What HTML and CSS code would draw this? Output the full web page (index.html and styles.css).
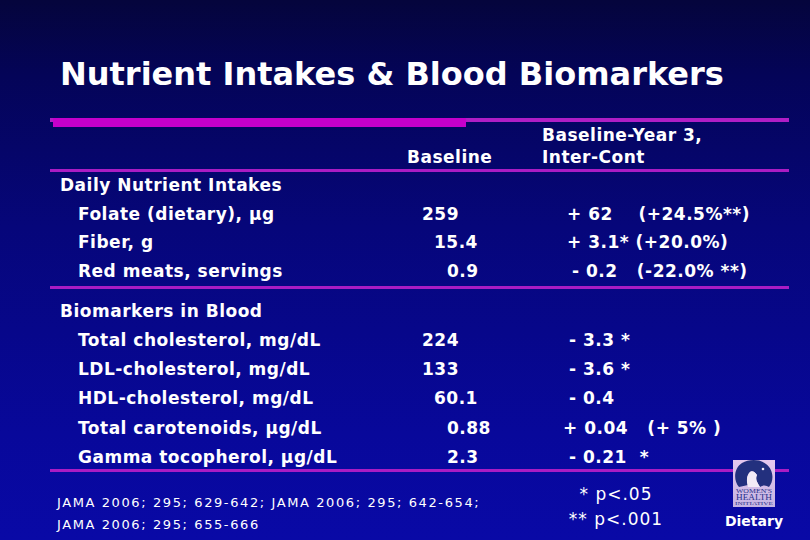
FILE: index.html
```
<!DOCTYPE html>
<html>
<head>
<meta charset="utf-8">
<link rel="stylesheet" href="styles.css">
</head>
<body>
<div class="slide">
  <h1 class="title">Nutrient Intakes &amp; Blood Biomarkers</h1>
  <div class="table">
    <div class="rule-top"><div class="bar"></div></div>
    <div class="row head">
      <div class="c1"></div>
      <div class="c2 hb">Baseline</div>
      <div class="c3">Baseline-Year 3,<br>Inter-Cont</div>
    </div>
    <div class="rule"></div>
    <div class="sec-title s1">Daily Nutrient Intakes</div>
    <div class="row r1"><div class="c1">Folate (dietary), µg</div><div class="c2 p15">259</div><div class="c3 o25">+ 62    (+24.5%**)</div></div>
    <div class="row r1"><div class="c1">Fiber, g</div><div class="c2 p27">15.4</div><div class="c3 o25">+ 3.1* (+20.0%)</div></div>
    <div class="row r1"><div class="c1">Red meats, servings</div><div class="c2 p40">0.9</div><div class="c3 o30">- 0.2   (-22.0% **)</div></div>
    <div class="rule"></div>
    <div class="sec-title s2">Biomarkers in Blood</div>
    <div class="row r2"><div class="c1">Total cholesterol, mg/dL</div><div class="c2 p15">224</div><div class="c3 o27">- 3.3 *</div></div>
    <div class="row r2"><div class="c1">LDL-cholesterol, mg/dL</div><div class="c2 p15">133</div><div class="c3 o27">- 3.6 *</div></div>
    <div class="row r2"><div class="c1">HDL-cholesterol, mg/dL</div><div class="c2 p27">60.1</div><div class="c3 o27">- 0.4</div></div>
    <div class="row r2"><div class="c1">Total carotenoids, µg/dL</div><div class="c2 p40">0.88</div><div class="c3 o21">+ 0.04   (+ 5% )</div></div>
    <div class="row r2"><div class="c1">Gamma tocopherol, µg/dL</div><div class="c2 p40">2.3</div><div class="c3 o27">- 0.21  *</div></div>
    <div class="rule last"></div>
  </div>
  <div class="footer">
    <div class="refs">JAMA 2006; 295; 629-642; JAMA 2006; 295; 642-654;<br>JAMA 2006; 295; 655-666</div>
    <div class="pvals">* p&lt;.05<br>** p&lt;.001</div>
    <div class="brand">
      <svg class="logo" width="42" height="47" viewBox="0 0 42 47">
        <defs>
          <linearGradient id="lg" x1="0" y1="0" x2="0" y2="1">
            <stop offset="0" stop-color="#e6c8ee"/>
            <stop offset="1" stop-color="#c4b4e2"/>
          </linearGradient>
        </defs>
        <rect x="0" y="0" width="42" height="47" fill="url(#lg)"/>
        <path d="M6 27 C0 20 1 8 9 3 C16 -1 27 -1 33 4 C41 10 41 21 36 27 C33 25 30 25 27 27 C24 22 22 19 24 15 C22 12 19 10 17 12 C14 15 13 20 15 25 C12 26 9 26 6 27 Z" fill="#23307e"/>
        <path d="M17 12 C19 10 22 12 24 15 C22 19 24 22 27 27 L15 27 C13 20 14 15 17 12 Z" fill="#f2eaf6"/>
        <circle cx="30" cy="9" r="1.3" fill="#f2eaf6"/>
        <text x="21" y="32.5" text-anchor="middle" font-family="Liberation Serif, serif" font-size="5.2" fill="#27308a" textLength="36" lengthAdjust="spacingAndGlyphs">WOMEN'S</text>
        <text x="21" y="39.5" text-anchor="middle" font-family="Liberation Serif, serif" font-size="7.5" fill="#27308a" textLength="36" lengthAdjust="spacingAndGlyphs">HEALTH</text>
        <text x="21" y="45" text-anchor="middle" font-family="Liberation Serif, serif" font-size="5" fill="#27308a" textLength="38" lengthAdjust="spacingAndGlyphs">INITIATIVE</text>
      </svg>
      <div class="dietary">Dietary</div>
    </div>
  </div>
</div>
</body>
</html>
```
FILE: styles.css
```
html, body {
  margin: 0;
  padding: 0;
}
body {
  background: #05056a;
}
.slide {
  width: 810px;
  height: 540px;
  overflow: hidden;
  color: #ffffff;
  font-family: "DejaVu Sans", sans-serif;
  background: linear-gradient(to bottom, #05053c 0%, #040458 14%, #06067a 42%, #08089a 80%, #0909a6 100%);
}
.title {
  margin: 0;
  padding: 56px 0 0 60px;
  font-weight: bold;
  font-size: 32px;
  line-height: 36px;
}
.table {
  margin: 26px 0 0 50px;
  width: 739px;
  font-weight: bold;
  font-size: 17px;
  letter-spacing: 0.5px;
}
.rule-top {
  height: 10px;
  background: linear-gradient(#b01ec6, #b01ec6) top left / 100% 4px no-repeat;
}
.bar {
  margin: 1px 0 0 3px;
  width: 413px;
  height: 9px;
  background: #c600cc;
}
.rule {
  height: 3px;
  background: #aa1cc4;
}
.rule.last {
  margin-top: -3px;
}
.row {
  display: grid;
  grid-template-columns: 357px 135px 1fr;
  white-space: pre;
}
.head {
  margin-top: -4px;
  height: 44px;
  line-height: 22px;
  margin-bottom: 1px;
}
.hb {
  align-self: end;
}
.c1 {
  padding-left: 28px;
}
.sec-title {
  padding-left: 10px;
}
.s1 {
  line-height: 27.5px;
}
.r1 {
  line-height: 28.7px;
}
.s2 {
  margin-top: 8px;
  line-height: 29px;
}
.r2 {
  line-height: 29.3px;
}
.p15 { padding-left: 15px; }
.p27 { padding-left: 27px; }
.p40 { padding-left: 40px; }
.o21 { padding-left: 21px; }
.o25 { padding-left: 25px; }
.o27 { padding-left: 27px; }
.o30 { padding-left: 30px; }
.footer {
  margin-top: 2px;
  display: flex;
  align-items: flex-start;
}
.refs {
  width: 504px;
  padding: 18px 0 0 57px;
  font-size: 13px;
  line-height: 22px;
  letter-spacing: 1.6px;
  white-space: nowrap;
}
.pvals {
  width: 110px;
  padding-top: 8px;
  text-align: center;
  font-size: 17px;
  line-height: 25px;
  letter-spacing: 1px;
}
.brand {
  margin: -14px 0 0 53px;
  display: flex;
  flex-direction: column;
  align-items: center;
  width: 60px;
}
.logo {
  display: block;
}
.dietary {
  margin-top: 5px;
  font-weight: bold;
  font-size: 14px;
  line-height: 18px;
}
```
